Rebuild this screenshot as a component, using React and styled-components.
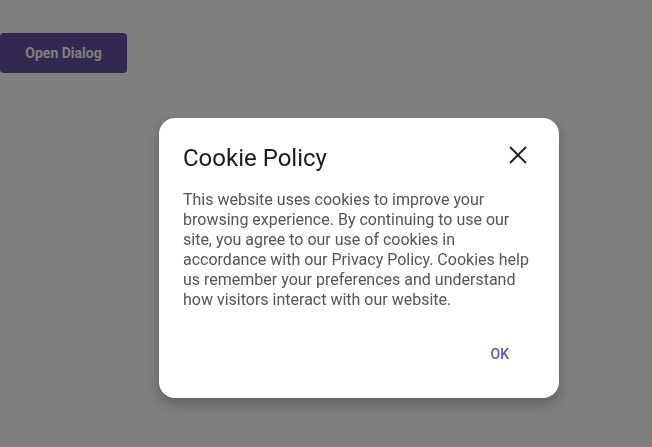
import React from "react";
import styled, { createGlobalStyle } from "styled-components";

const Global = createGlobalStyle`
  html, body { margin: 0; padding: 0; background: #ffffff; }
  body { font-family: Roboto, "Noto Sans", Arial, sans-serif; }
`;

const Page = styled.div`
  padding-top: 33px;
`;

const OpenButton = styled.button`
  width: 127px;
  height: 40px;
  padding: 0;
  border: none;
  border-radius: 4px;
  background: #6750a4;
  color: #ffffff;
  font-family: Roboto, sans-serif;
  font-size: 14px;
  font-weight: 700;
  cursor: pointer;
`;

const Overlay = styled.div`
  position: fixed;
  inset: 0;
  background: rgba(0, 0, 0, 0.5);
  display: flex;
  align-items: flex-start;
  padding: 118px 0 0 159px;
`;

const Dialog = styled.div`
  width: 400px;
  height: 280px;
  box-sizing: border-box;
  background: #ffffff;
  border-radius: 16px;
  box-shadow: 0 6px 14px rgba(0, 0, 0, 0.25);
  padding: 24px 24px 26px;
  display: flex;
  flex-direction: column;
`;

const Header = styled.div`
  display: flex;
  align-items: flex-start;
  justify-content: space-between;
`;

const Title = styled.h2`
  margin: 0;
  font-size: 24px;
  font-weight: 400;
  line-height: 32px;
  color: #1c1b1f;
`;

const CloseButton = styled.button`
  width: 24px;
  height: 24px;
  margin: 1px 5px 0 0;
  border: none;
  background: transparent;
  display: flex;
  align-items: center;
  justify-content: center;
  padding: 0;
  cursor: pointer;
  color: #1c1b1f;
`;

const Body = styled.p`
  margin: 16px 0 0;
  font-size: 16px;
  line-height: 20px;
  color: #555555;
`;

const Actions = styled.div`
  margin-top: auto;
  display: flex;
  justify-content: flex-end;
`;

const TextButton = styled.button`
  border: none;
  background: transparent;
  color: #6750a4;
  font-family: Roboto, sans-serif;
  font-size: 14px;
  font-weight: 500;
  height: 36px;
  padding: 0 28px;
  margin-right: -2px;
  cursor: pointer;
`;

export default function App() {
  return (
    <>
      <Global />
      <Page>
        <OpenButton>Open Dialog</OpenButton>
      </Page>
      <Overlay>
        <Dialog>
          <Header>
            <Title>Cookie Policy</Title>
            <CloseButton aria-label="close">
              <svg width="18" height="18" viewBox="0 0 18 18">
                <path d="M1 1 L17 17 M17 1 L1 17" stroke="currentColor" strokeWidth="1.8" fill="none" />
              </svg>
            </CloseButton>
          </Header>
          <Body>
            This website uses cookies to improve your browsing experience. By continuing to use our site, you agree to our use of cookies in accordance with our Privacy Policy. Cookies help us remember your preferences and understand how visitors interact with our website.
          </Body>
          <Actions>
            <TextButton>OK</TextButton>
          </Actions>
        </Dialog>
      </Overlay>
    </>
  );
}
